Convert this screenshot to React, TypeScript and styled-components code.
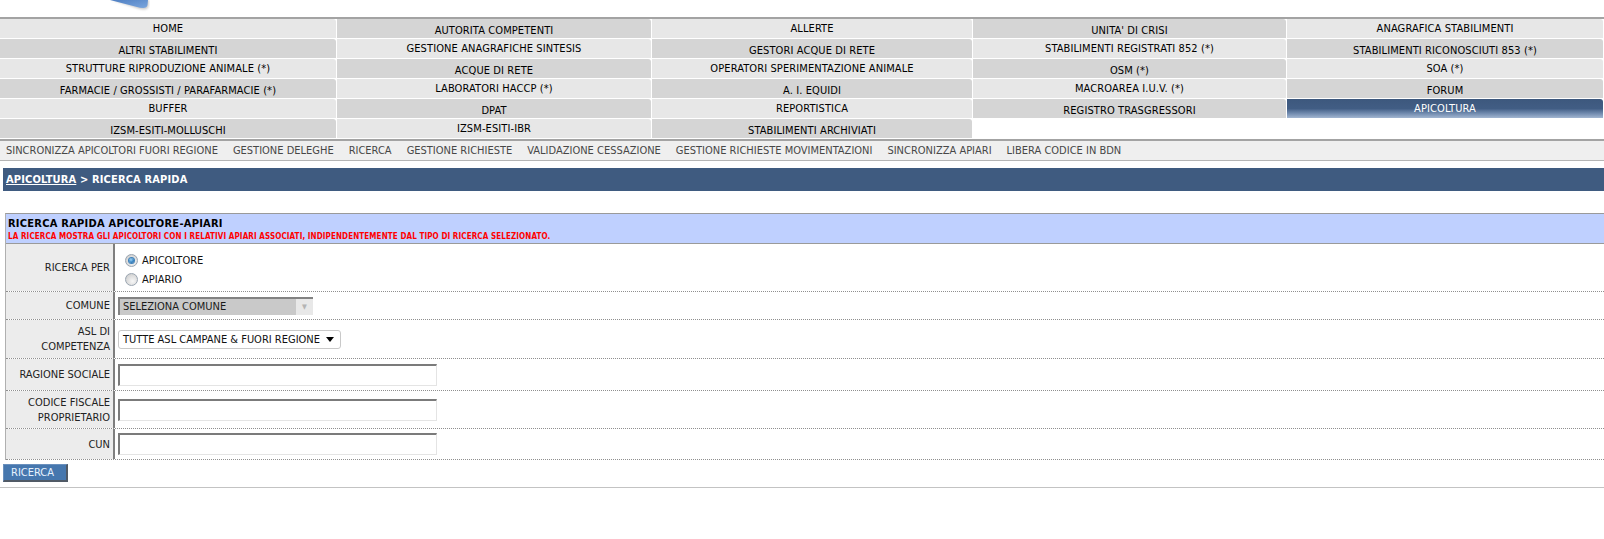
import React from "react";
import styled, { createGlobalStyle, css } from "styled-components";

const GlobalStyle = createGlobalStyle`
  html, body {
    margin: 0;
    padding: 0;
    background: #ffffff;
  }
  body {
    font-family: "DejaVu Sans Condensed", "DejaVu Sans", "Liberation Sans", sans-serif;
    font-stretch: condensed;
    font-size: 11px;
    color: #111;
  }
`;

const Page = styled.div`
  width: 1604px;
  min-height: 539px;
  background: #fff;
`;

const TopStrip = styled.div`
  height: 17px;
  border-bottom: 2px solid #a3a3a3;
  display: flex;
  align-items: flex-start;
  padding-left: 106px;
`;

const MenuGrid = styled.div`
  display: grid;
  grid-template-columns: 336px 314px 320px 313px 316px;
  grid-auto-rows: 19px;
  column-gap: 1px;
  row-gap: 1px;
  margin-bottom: 1px;
`;

const MenuCell = styled.div<{ $tone: number; $active?: boolean }>`
  height: 19px;
  box-sizing: border-box;
  text-align: center;
  line-height: 14px;
  font-size: 11px;
  letter-spacing: 0.1px;
  color: #000;
  white-space: nowrap;
  overflow: hidden;
  border-top-right-radius: 3px;
  padding-top: ${(p) => (p.$tone === 0 ? "3px" : "5px")};
  background: ${(p) => (p.$tone === 0 ? "#e7e7e7" : "#d5d5d5")};
  ${(p) =>
    p.$active &&
    css`
      padding-top: 3px;
      color: #ffffff;
      background: linear-gradient(
        to bottom,
        #3d587d 0%,
        #415d84 50%,
        #6f89ad 75%,
        #a2b6d1 100%
      );
    `}
`;

const SubNav = styled.div`
  height: 19px;
  border-top: 2px solid #a3a3a3;
  border-bottom: 1px solid #b5b5b5;
  background: #efefef;
  display: flex;
  align-items: center;
  gap: 15px;
  padding: 0 6px;
  font-size: 11px;
  color: #474747;
  white-space: nowrap;
`;

const SubNavItem = styled.span``;

const Breadcrumb = styled.div`
  margin: 7px 0 0 3px;
  height: 23px;
  background: #3f5b80;
  color: #ffffff;
  font-weight: bold;
  font-size: 11px;
  letter-spacing: 0.15px;
  display: flex;
  align-items: center;
  padding-left: 3px;
`;

const CrumbLink = styled.span`
  text-decoration: underline;
`;

const FormTable = styled.div`
  margin: 22px 0 0 5px;
  border-top: 1px solid #9a9a9a;
  border-left: 1px solid #b0b0b0;
`;

const FormHeader = styled.div`
  background: #bfd0ff;
  border-bottom: 1px solid #9a9a9a;
  padding: 3px 2px 0 2px;
  height: 26px;
`;

const HeaderTitle = styled.div`
  font-weight: bold;
  font-size: 11px;
  letter-spacing: 0.25px;
  line-height: 14px;
  color: #000;
`;

const HeaderNote = styled.div`
  font-weight: bold;
  font-size: 8px;
  letter-spacing: 0.1px;
  line-height: 11px;
  color: #ff0000;
`;

const FormRow = styled.div<{ $h: number }>`
  display: grid;
  grid-template-columns: 109px 1fr;
  min-height: ${(p) => p.$h}px;
  border-bottom: 1px dotted #8f8f8f;
`;

const LabelCell = styled.div`
  background: #ececec;
  border-right: 2px solid #7f7f7f;
  display: flex;
  align-items: center;
  justify-content: flex-end;
  text-align: right;
  padding-right: 3px;
  font-size: 11px;
  line-height: 15px;
  color: #222;
`;

const ValueCell = styled.div<{ $top?: boolean }>`
  display: flex;
  flex-direction: column;
  justify-content: ${(p) => (p.$top ? "flex-start" : "center")};
  align-items: flex-start;
  padding: ${(p) => (p.$top ? "7px 3px 0 3px" : "0 3px")};
`;

const RadioOption = styled.label`
  display: flex;
  align-items: center;
  height: 19px;
  gap: 4px;
  padding-left: 7px;
  font-size: 11px;
  color: #111;
`;

const RadioDot = styled.span<{ $checked?: boolean }>`
  width: 11px;
  height: 11px;
  border-radius: 50%;
  border: 1px solid #9aa5b1;
  background: radial-gradient(circle at 60% 65%, #f7f7f7 0%, #dadada 60%, #c4c4c4 100%);
  display: inline-flex;
  align-items: center;
  justify-content: center;
  ${(p) =>
    p.$checked &&
    css`
      &::after {
        content: "";
        width: 5px;
        height: 5px;
        border-radius: 50%;
        background: radial-gradient(circle at 40% 35%, #9fd3f5 0%, #2f7fc0 60%, #1b4f86 100%);
        box-shadow: 0 0 0 1px #3e80b8;
      }
    `}
`;

const DisabledSelect = styled.div`
  display: flex;
  width: 195px;
  height: 18px;
  box-sizing: border-box;
  border-top: 2px solid #828282;
  border-left: 2px solid #828282;
  background: #c9c9c9;
`;

const DisabledText = styled.span`
  flex: 1;
  padding-left: 3px;
  font-size: 11px;
  line-height: 16px;
  color: #1a1a1a;
`;

const DisabledArrow = styled.span`
  width: 17px;
  background: #e8e8e8;
  color: #b4b4b4;
  font-size: 7px;
  display: flex;
  align-items: center;
  justify-content: center;
`;

const AslSelect = styled.div`
  display: flex;
  align-items: center;
  width: 223px;
  height: 19px;
  box-sizing: border-box;
  border: 1px solid #c9c9c9;
  border-radius: 3px;
  background: #fff;
  padding: 0 4px;
  font-size: 11px;
  color: #111;
`;

const AslText = styled.span`
  flex: 1;
`;

const CaretIcon = styled.svg`
  width: 8px;
  height: 5px;
  margin-right: 2px;
`;

const TextInput = styled.div`
  width: 319px;
  height: 22px;
  box-sizing: border-box;
  border-top: 2px solid #7b7b7b;
  border-left: 2px solid #7b7b7b;
  border-right: 1px solid #e4e4e4;
  border-bottom: 1px solid #e4e4e4;
  background: #fff;
`;

const SearchButton = styled.button`
  margin: 4px 0 0 3px;
  width: 65px;
  height: 18px;
  box-sizing: border-box;
  background: #4677ae;
  color: #e6f2ff;
  font-family: inherit;
  font-stretch: condensed;
  font-size: 11px;
  text-align: left;
  padding: 0 0 0 7px;
  border-top: 1px solid #6a90bd;
  border-left: 1px solid #6a90bd;
  border-right: 2px solid #505a66;
  border-bottom: 2px solid #505a66;
  border-radius: 0;
  line-height: 14px;
`;

const BottomRule = styled.div`
  margin-top: 5px;
  border-top: 1px solid #c3c3c3;
`;

const LogoTip = () => (
  <svg width="44" height="12" viewBox="0 0 44 12">
    <defs>
      <linearGradient id="lg" x1="0" y1="0" x2="1" y2="1">
        <stop offset="0" stopColor="#4f7fc2" />
        <stop offset="1" stopColor="#7aa6de" />
      </linearGradient>
      <filter id="blur" x="-20%" y="-50%" width="140%" height="200%">
        <feGaussianBlur stdDeviation="0.9" />
      </filter>
    </defs>
    <path d="M6 0 L43 0 L42.6 6 Q42 9.5 38 9.5 Q35 9.5 32 8.5 Z" fill="#8a8a8a" opacity="0.45" filter="url(#blur)" />
    <path d="M4 0 L42 0 L41.5 5 Q41 8 37 8 Q34 8 31 7 Z" fill="url(#lg)" />
  </svg>
);

const menuItems = [
  "HOME",
  "AUTORITA COMPETENTI",
  "ALLERTE",
  "UNITA' DI CRISI",
  "ANAGRAFICA STABILIMENTI",
  "ALTRI STABILIMENTI",
  "GESTIONE ANAGRAFICHE SINTESIS",
  "GESTORI ACQUE DI RETE",
  "STABILIMENTI REGISTRATI 852 (*)",
  "STABILIMENTI RICONOSCIUTI 853 (*)",
  "STRUTTURE RIPRODUZIONE ANIMALE (*)",
  "ACQUE DI RETE",
  "OPERATORI SPERIMENTAZIONE ANIMALE",
  "OSM (*)",
  "SOA (*)",
  "FARMACIE / GROSSISTI / PARAFARMACIE (*)",
  "LABORATORI HACCP (*)",
  "A. I. EQUIDI",
  "MACROAREA I.U.V. (*)",
  "FORUM",
  "BUFFER",
  "DPAT",
  "REPORTISTICA",
  "REGISTRO TRASGRESSORI",
  "APICOLTURA",
  "IZSM-ESITI-MOLLUSCHI",
  "IZSM-ESITI-IBR",
  "STABILIMENTI ARCHIVIATI",
];

const subNav = [
  "SINCRONIZZA APICOLTORI FUORI REGIONE",
  "GESTIONE DELEGHE",
  "RICERCA",
  "GESTIONE RICHIESTE",
  "VALIDAZIONE CESSAZIONE",
  "GESTIONE RICHIESTE MOVIMENTAZIONI",
  "SINCRONIZZA APIARI",
  "LIBERA CODICE IN BDN",
];

export default function App() {
  return (
    <Page>
      <GlobalStyle />
      <TopStrip>
        <LogoTip />
      </TopStrip>
      <MenuGrid>
        {menuItems.map((label, i) => {
          const row = Math.floor(i / 5);
          const col = i % 5;
          return (
            <MenuCell key={label} $tone={(row + col) % 2} $active={label === "APICOLTURA"}>
              {label}
            </MenuCell>
          );
        })}
      </MenuGrid>
      <SubNav>
        {subNav.map((s) => (
          <SubNavItem key={s}>{s}</SubNavItem>
        ))}
      </SubNav>
      <Breadcrumb>
        <CrumbLink>APICOLTURA</CrumbLink>&nbsp;&gt; RICERCA RAPIDA
      </Breadcrumb>
      <FormTable>
        <FormHeader>
          <HeaderTitle>RICERCA RAPIDA APICOLTORE-APIARI</HeaderTitle>
          <HeaderNote>
            LA RICERCA MOSTRA GLI APICOLTORI CON I RELATIVI APIARI ASSOCIATI, INDIPENDENTEMENTE DAL TIPO DI RICERCA SELEZIONATO.
          </HeaderNote>
        </FormHeader>
        <FormRow $h={47}>
          <LabelCell>RICERCA PER</LabelCell>
          <ValueCell $top>
            <RadioOption>
              <RadioDot $checked />
              APICOLTORE
            </RadioOption>
            <RadioOption>
              <RadioDot />
              APIARIO
            </RadioOption>
          </ValueCell>
        </FormRow>
        <FormRow $h={27}>
          <LabelCell>COMUNE</LabelCell>
          <ValueCell>
            <DisabledSelect>
              <DisabledText>SELEZIONA COMUNE</DisabledText>
              <DisabledArrow>▼</DisabledArrow>
            </DisabledSelect>
          </ValueCell>
        </FormRow>
        <FormRow $h={38}>
          <LabelCell>
            ASL DI
            <br />
            COMPETENZA
          </LabelCell>
          <ValueCell>
            <AslSelect>
              <AslText>TUTTE ASL CAMPANE &amp; FUORI REGIONE</AslText>
              <CaretIcon viewBox="0 0 8 5">
                <path d="M0 0 L8 0 L4 5 Z" fill="#000" />
              </CaretIcon>
            </AslSelect>
          </ValueCell>
        </FormRow>
        <FormRow $h={31}>
          <LabelCell>RAGIONE SOCIALE</LabelCell>
          <ValueCell>
            <TextInput />
          </ValueCell>
        </FormRow>
        <FormRow $h={37}>
          <LabelCell>
            CODICE FISCALE
            <br />
            PROPRIETARIO
          </LabelCell>
          <ValueCell>
            <TextInput />
          </ValueCell>
        </FormRow>
        <FormRow $h={30}>
          <LabelCell>CUN</LabelCell>
          <ValueCell>
            <TextInput />
          </ValueCell>
        </FormRow>
      </FormTable>
      <SearchButton>RICERCA</SearchButton>
      <BottomRule />
    </Page>
  );
}
